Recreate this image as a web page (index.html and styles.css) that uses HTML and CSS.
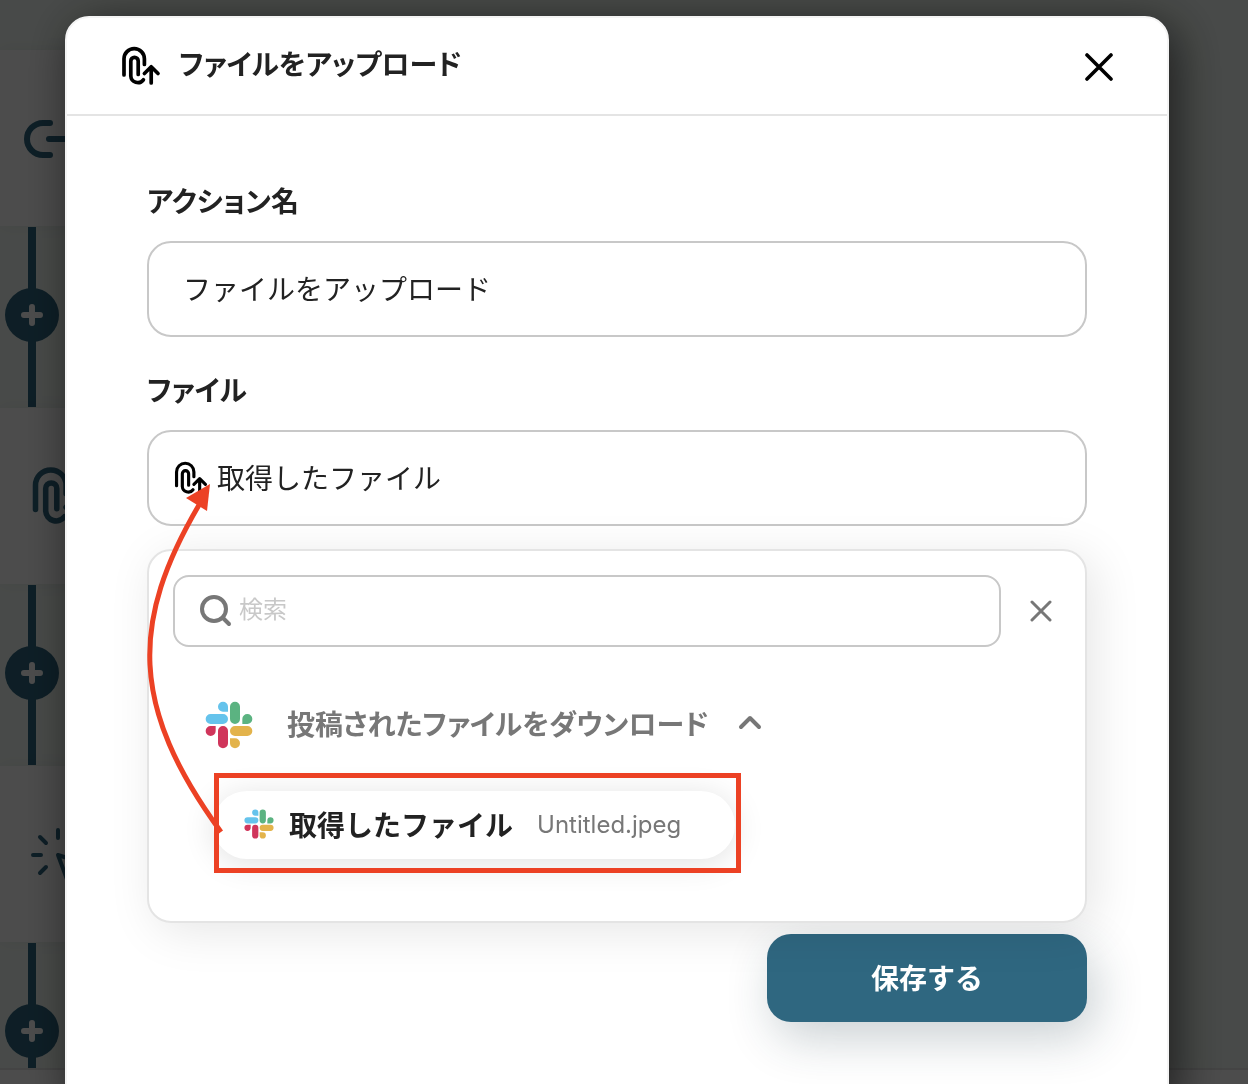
FILE: index.html
```html
<!DOCTYPE html>
<html lang="ja">
<head>
  <meta charset="UTF-8" />
  <meta name="viewport" content="width=device-width, initial-scale=1.0"/>
  <title>ファイルをアップロード</title>
  <link rel="stylesheet" href="styles.css">
</head>
<body>
  <svg class="defs" aria-hidden="true">
    <symbol id="clip" viewBox="0 0 40 40">
      <g fill="none" stroke="currentColor" stroke-width="3.7" stroke-linecap="round" stroke-linejoin="round">
        <path d="M3 29V12.8a10.2 10.2 0 0 1 20.4 0V18.5"/>
        <path d="M17.2 28.5V15a3.7 3.7 0 0 0-7.4 0V30a7 7 0 0 0 12.6 3.8"/>
        <path d="M30.2 37V21M23.4 27.5L30.2 20.8l6.8 6.7"/>
      </g>
    </symbol>
    <symbol id="slack" viewBox="-2 -2 144 144">
      <path fill="#65c3ec" d="M67 30H52a15 15 0 1 1 15-15zM15 37h37a15 15 0 0 1 0 30H15a15 15 0 0 1 0-30z"/>
      <path fill="#5bb381" d="M110 67V52a15 15 0 1 1 15 15zM73 15a15 15 0 0 1 30 0v37a15 15 0 0 1-30 0z"/>
      <path fill="#e3b34b" d="M73 110h15a15 15 0 1 1-15 15zM88 73h37a15 15 0 0 1 0 30H88a15 15 0 0 1 0-30z"/>
      <path fill="#d0355b" d="M30 73v15a15 15 0 1 1-15-15zM37 88a15 15 0 0 1 30 0v37a15 15 0 0 1-30 0z"/>
    </symbol>
    <symbol id="plus" viewBox="0 0 54 54">
      <circle cx="27" cy="27" r="27" fill="#2f6780"/>
      <path d="M27 19v16M19 27h16" stroke="#fff" stroke-width="6" stroke-linecap="round"/>
    </symbol>
  </svg>

  <!-- workflow behind the dialog -->
  <div class="canvas">
    <div class="flow">
      <div class="step">
        <svg class="step-icon" viewBox="0 0 76 64" fill="none" stroke="currentColor" stroke-width="6" stroke-linecap="round">
          <path d="M26 17H19a16 16 0 0 0 0 32h7M25 33H50M52 17h7a16 16 0 0 1 0 32h-7"/>
        </svg>
      </div>
      <div class="connector"><svg class="add"><use href="#plus"/></svg></div>
      <div class="step">
        <svg class="step-icon clip"><use href="#clip"/></svg>
      </div>
      <div class="connector"><svg class="add"><use href="#plus"/></svg></div>
      <div class="step">
        <svg class="step-icon click" viewBox="0 0 64 64" fill="none" stroke="currentColor" stroke-width="4" stroke-linecap="round" stroke-linejoin="round">
          <path d="M28 8v8M10 15l6 6M3 33h8M10 51l6-6M46 15l-6 6M28 33l28 9-12 6-6 12z"/>
        </svg>
      </div>
      <div class="connector"><svg class="add"><use href="#plus"/></svg></div>
    </div>
    <div class="bottom-bar"></div>
  </div>

  <div class="overlay">
    <div class="modal" role="dialog" aria-labelledby="title">
      <div class="modal-header">
        <svg class="header-icon"><use href="#clip"/></svg>
        <h1 id="title">ファイルをアップロード</h1>
        <button class="icon-button close" aria-label="閉じる">
          <svg width="30" height="30" viewBox="0 0 30 30" stroke="currentColor" stroke-width="3.6" stroke-linecap="round"><path d="M3 4l24 24M27 4L3 28"/></svg>
        </button>
      </div>

      <form class="modal-body">
        <label for="action">アクション名</label>
        <input class="field" id="action" type="text" value="ファイルをアップロード">

        <label for="file">ファイル</label>
        <div class="file-field">
          <svg class="file-icon"><use href="#clip"/></svg>
          <input class="field" id="file" type="text" value="取得したファイル">
        </div>

        <div class="panel">
          <div class="search-row">
            <div class="search">
              <svg width="34" height="34" viewBox="0 0 34 34" fill="none" stroke="currentColor" stroke-width="4" stroke-linecap="round"><circle cx="15" cy="15" r="12"/><path d="M24 24l6 6"/></svg>
              <input type="search" placeholder="検索" aria-label="検索">
            </div>
            <button type="button" class="icon-button" aria-label="クリア">
              <svg width="22" height="22" viewBox="0 0 22 22" stroke="currentColor" stroke-width="3" stroke-linecap="round"><path d="M2 2l18 18M20 2L2 20"/></svg>
            </button>
          </div>

          <button type="button" class="group">
            <svg class="slack"><use href="#slack"/></svg>
            <span>投稿されたファイルをダウンロード</span>
            <svg width="24" height="20" viewBox="0 0 24 20" fill="none" stroke="currentColor" stroke-width="4" stroke-linecap="round" stroke-linejoin="round"><path d="M3 12l9-9 9 9"/></svg>
          </button>

          <button type="button" class="item">
            <svg class="slack-small"><use href="#slack"/></svg>
            <strong>取得したファイル</strong>
            <span>Untitled.jpeg</span>
          </button>

          <svg class="arrow" viewBox="0 0 100 360">
            <path d="M72 281C-20 155-18 70 50-46" fill="none" stroke="#ec4124" stroke-width="5"/>
            <path d="M61-67L37-53l21 13z" fill="#ec4124"/>
          </svg>
        </div>

        <button type="submit" class="save">保存する</button>
      </form>
    </div>
  </div>
</body>
</html>
```

FILE: styles.css
```css
* {
  box-sizing: border-box;
}
body {
  margin: 0;
  height: 100vh;
  overflow: hidden;
  font-family: Inter, "Noto Sans CJK JP", sans-serif;
  font-size: 28px;
  color: #222;
}
button, input {
  font: inherit;
  color: inherit;
}
button {
  border: none;
  background: none;
  padding: 0;
  cursor: pointer;
}
svg {
  display: block;
  flex-shrink: 0;
}
.defs {
  position: absolute;
  width: 0;
  height: 0;
}

/* workflow */
.canvas {
  display: flex;
  flex-direction: column;
  height: 100vh;
  background: #f2f9f4;
  color: #2f6780;
}
.flow {
  flex: 1;
  min-height: 0;
  overflow: hidden;
  padding-top: 50px;
}
.step {
  width: 60%;
  height: 176px;
  margin-bottom: 1px;
  display: flex;
  align-items: center;
  padding-left: 16px;
  background: #fff;
  box-shadow: 0 0 16px rgba(0, 0, 0, 0.06);
}
.step-icon {
  width: 76px;
  height: 64px;
  margin-left: 8px;
}
.step-icon.clip {
  width: 60px;
  height: 60px;
  margin-left: 15px;
}
.step-icon.click {
  width: 64px;
  margin-left: 14px;
}
.connector {
  width: 8px;
  height: 180px;
  margin: 0 0 1px 28px;
  padding-bottom: 4px;
  display: flex;
  align-items: center;
  justify-content: center;
  background: #2f6780;
}
.add {
  width: 54px;
  height: 54px;
}
.bottom-bar {
  height: 16px;
  background: #fff;
  border-top: 2px solid #e4e4e4;
}

/* dialog */
.overlay {
  position: fixed;
  inset: 0;
  padding: 16px 79px 0 65px;
  background: rgba(0, 0, 0, 0.7);
}
.modal {
  background: #fff;
  border: 2px solid #f4f4f4;
  border-radius: 24px;
  box-shadow: 8px 8px 48px rgba(0, 0, 0, 0.6);
}
.modal-header {
  display: flex;
  align-items: center;
  height: 98px;
  padding: 0 53px 0 54px;
  border-bottom: 2px solid #e4e4e4;
}
.header-icon {
  width: 40px;
  height: 40px;
  color: #000;
}
h1 {
  flex: 1;
  margin: 0 0 2px 18px;
  font-size: 28px;
  line-height: 40px;
  font-weight: 600;
  font-feature-settings: "palt";
}
.icon-button {
  color: #777;
}
.icon-button.close {
  color: #000;
}
.modal-body {
  display: flex;
  flex-direction: column;
  padding: 66px 80px 84px;
}
label {
  margin-bottom: 18px;
  line-height: 41px;
  font-weight: 600;
  font-feature-settings: "palt";
}
.field {
  width: 100%;
  height: 96px;
  padding: 0 34px 2px;
  border: 2px solid #c8c8c8;
  border-radius: 24px;
  background: #fff;
}
#action {
  margin-bottom: 34px;
}
.file-field {
  position: relative;
}
.file-field .field {
  padding-left: 68px;
}
.file-icon {
  position: absolute;
  left: 27px;
  top: 31px;
  width: 34px;
  height: 34px;
  color: #000;
}
.panel {
  position: relative;
  z-index: 1;
  margin: 23px 0 11px;
  padding: 24px 24px 62px;
  border: 2px solid #e4e4e4;
  border-radius: 24px;
  background: #fff;
  box-shadow: 8px 8px 48px rgba(0, 0, 0, 0.1);
}
.search-row {
  display: flex;
  align-items: center;
  gap: 29px;
  padding-right: 9px;
}
.search {
  flex: 1;
  display: flex;
  align-items: center;
  gap: 6px;
  height: 72px;
  padding: 0 24px;
  border: 2px solid #c8c8c8;
  border-radius: 16px;
  color: #777;
}
.search input {
  flex: 1;
  min-width: 0;
  padding: 0 0 4px;
  border: none;
  outline: none;
  background: none;
  font-size: 24px;
}
.search input::placeholder {
  color: #c8c8c8;
}
.group {
  display: flex;
  align-items: center;
  margin: 54px 0 42px 32px;
  color: #777;
  font-weight: 600;
  line-height: 48px;
}
.group span {
  margin: 0 29px 0 34px;
  font-feature-settings: "palt";
}
.slack {
  width: 48px;
  height: 48px;
}
.slack-small {
  width: 30px;
  height: 30px;
}
.item {
  position: relative;
  display: flex;
  align-items: center;
  height: 68px;
  margin-left: 40px;
  padding: 0 54px 2px 31px;
  border-radius: 34px;
  background: #fff;
  box-shadow: 0 4px 32px rgba(0, 0, 0, 0.12);
}
.item strong {
  margin: 0 24px 0 15px;
  font-weight: 600;
}
.item span {
  font-size: 24px;
  color: #777;
}
.item::after {
  content: "";
  position: absolute;
  inset: -18px -6px -14px 1px;
  border: 5px solid #ec4124;
}
.arrow {
  position: absolute;
  left: 0;
  top: 0;
  width: 100px;
  height: 360px;
  overflow: visible;
  pointer-events: none;
}
.save {
  align-self: flex-end;
  width: 320px;
  height: 88px;
  padding-bottom: 2px;
  border-radius: 24px;
  background: #2f6780;
  color: #fff;
  font-weight: 600;
  box-shadow: 8px 16px 48px rgba(32, 60, 70, 0.24);
}
```
